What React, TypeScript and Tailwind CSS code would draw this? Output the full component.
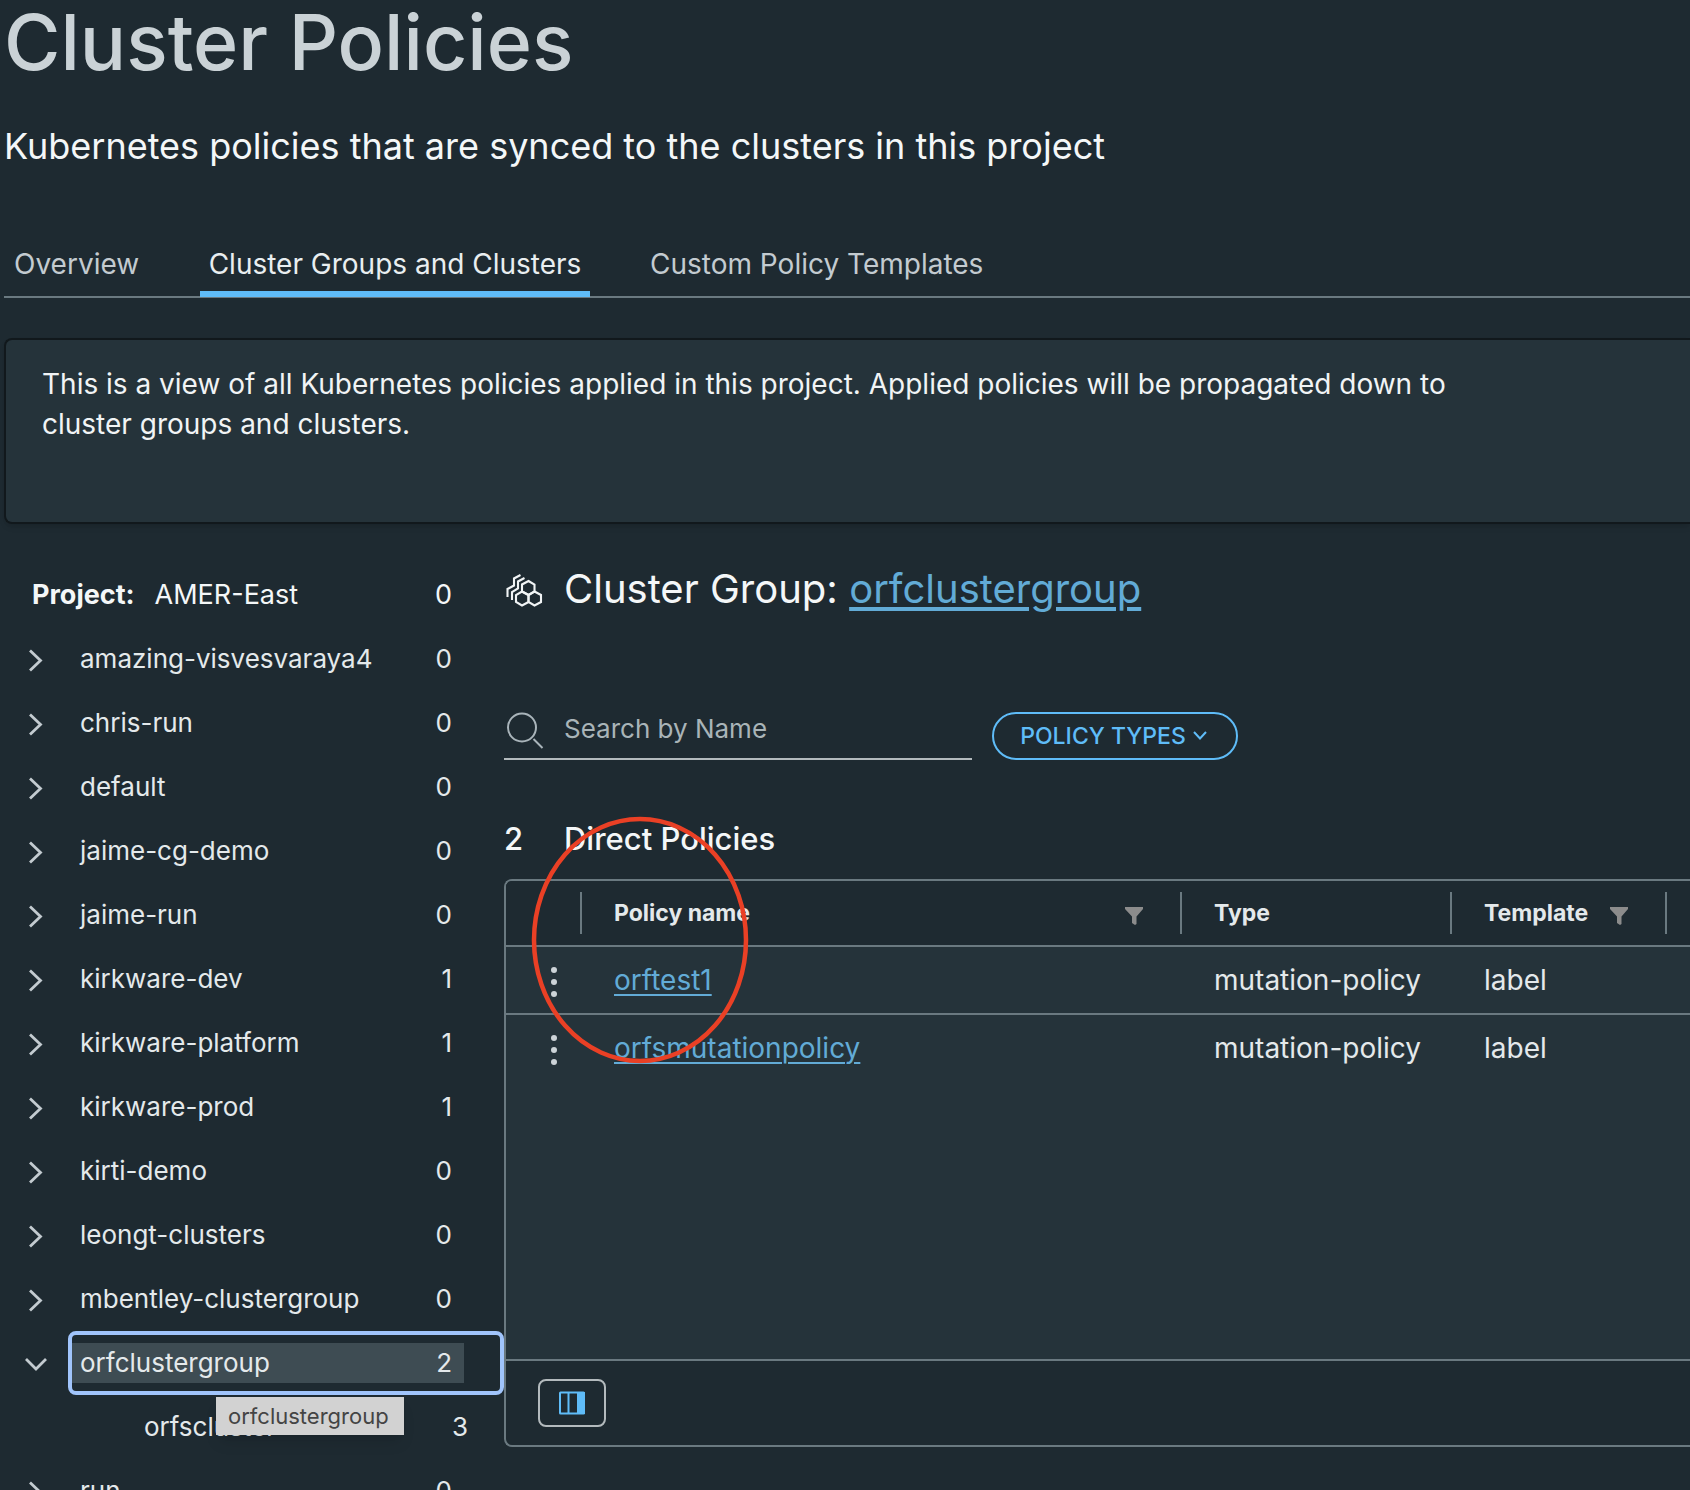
import React from "react";

type Group = { name: string; count: number };

const groups: Group[] = [
  { name: "amazing-visvesvaraya4", count: 0 },
  { name: "chris-run", count: 0 },
  { name: "default", count: 0 },
  { name: "jaime-cg-demo", count: 0 },
  { name: "jaime-run", count: 0 },
  { name: "kirkware-dev", count: 1 },
  { name: "kirkware-platform", count: 1 },
  { name: "kirkware-prod", count: 1 },
  { name: "kirti-demo", count: 0 },
  { name: "leongt-clusters", count: 0 },
  { name: "mbentley-clustergroup", count: 0 },
];

const policies = [
  { name: "orftest1", type: "mutation-policy", template: "label" },
  { name: "orfsmutationpolicy", type: "mutation-policy", template: "label" },
];

function Chevron({ open = false }: { open?: boolean }) {
  return (
    <svg viewBox="0 0 24 24" className="size-6" fill="none" stroke="#c3cbd0" strokeWidth="2.8">
      {open ? <path d="M2 6 L12 16 L22 6" /> : <path d="M6 1.5 L16.5 11.5 L6 21.5" />}
    </svg>
  );
}

function ClusterGroupIcon() {
  return (
    <svg viewBox="0 0 40 40" className="size-10 shrink-0" fill="none" stroke="#f1f4f5" strokeWidth="2.1">
      <path d="M24.5 12 L30.5 15.5 V22.5 L24.5 26 L18 22.5 V15.5 Z" />
      <path d="M18 22.5 L24.5 26 V33 L18 36.5 L12 33 V26 Z" />
      <path d="M30.5 22.5 L37 26 V33 L30.5 36.5 L24.5 33 V26 Z" />
      <path d="M20.5 9 L14 12.5 V19.5 L8 23 V31" />
      <path d="M16.5 6 L10 9.5 V16.5 L3.5 20 V28" />
    </svg>
  );
}

function FilterIcon() {
  return (
    <svg viewBox="0 0 20 20" className="size-5 shrink-0" fill="#8c8c8c">
      <path d="M1 2 H19 V4 L12.5 11.5 V19 L11 20 L8 18 V11.5 L1 4 Z" />
    </svg>
  );
}

function FilterButton({ label }: { label: string }) {
  return (
    <button type="button" aria-label={label} className="mt-1 flex">
      <FilterIcon />
    </button>
  );
}

function Tree() {
  return (
    <nav aria-label="Cluster groups" className="w-[504px] shrink-0 text-[26px] text-[#e4e9eb]">
      <div className="flex h-[63px] items-center pl-8 pr-[52px] text-[27px] text-[#f4f7f8]">
        <strong className="font-bold">Project:</strong>
        <span className="ml-5">AMER-East</span>
        <span className="ml-auto">0</span>
      </div>
      <ul>
        {groups.map((g) => (
          <li key={g.name} className="flex h-16 items-center">
            <button type="button" aria-label={"Expand " + g.name} className="ml-6 mt-1 flex">
              <Chevron />
            </button>
            <a href="#" className="ml-8 flex flex-1 pb-0.5 pr-[52px]">
              <span>{g.name}</span>
              <span className="ml-auto">{g.count}</span>
            </a>
          </li>
        ))}
        <li>
          <div className="relative flex h-16 items-center">
            <button type="button" aria-label="Collapse orfclustergroup" className="ml-6 mt-1 flex">
              <Chevron open />
            </button>
            <a
              href="#"
              aria-current="true"
              className="ml-5 flex h-full flex-1 items-center rounded-lg border-4 border-[#a0c4fb]"
            >
              <span className="mr-9 flex h-10 flex-1 items-center bg-[#3e4c53] pb-0.5 pl-2 pr-3">
                <span>orfclustergroup</span>
                <span className="ml-auto">2</span>
              </span>
            </a>
            <div
              role="tooltip"
              className="absolute left-[216px] top-[66px] z-10 flex h-[38px] w-[188px] items-center bg-[#d2d2d2] px-3 text-[22px] text-[#444] shadow-lg"
            >
              orfclustergroup
            </div>
          </div>
          <a href="#" className="flex h-16 items-center pb-0.5 pl-36 pr-9">
            <span>orfscluster</span>
            <span className="ml-auto">3</span>
          </a>
        </li>
        <li className="flex h-16 items-center">
          <button type="button" aria-label="Expand run" className="ml-6 mt-1 flex">
            <Chevron />
          </button>
          <a href="#" className="ml-8 flex flex-1 pb-0.5 pr-[52px]">
            <span>run</span>
            <span className="ml-auto">0</span>
          </a>
        </li>
      </ul>
    </nav>
  );
}

function HeaderCell({ label, filter = false }: { label: string; filter?: boolean }) {
  return (
    <th scope="col" className="h-[66px] border-b-2 border-[#6a7980] p-0 text-left font-bold">
      <div className="flex h-[42px] items-center justify-between border-r-2 border-[#6a7980] pl-8 pr-9">
        <span className="whitespace-nowrap">{label}</span>
        {filter && <FilterButton label={"Filter by " + label} />}
      </div>
    </th>
  );
}

function PolicyGrid() {
  return (
    <div className="relative mt-5">
      <div className="overflow-hidden rounded-l-lg border-2 border-r-0 border-[#6a7980]">
        <div className="min-h-[478px] bg-[#25333a]">
          <table className="w-full table-fixed border-separate border-spacing-0">
            <colgroup>
              <col className="w-[76px]" />
              <col className="w-[600px]" />
              <col className="w-[270px]" />
              <col className="w-[215px]" />
              <col />
            </colgroup>
            <thead className="bg-[#1e2a31] text-[23px] text-[#e4e9eb]">
              <tr>
                <th className="border-b-2 border-[#6a7980] p-0">
                  <div className="h-[42px] border-r-2 border-[#6a7980]" />
                </th>
                <HeaderCell label="Policy name" filter />
                <HeaderCell label="Type" />
                <HeaderCell label="Template" filter />
                <th className="border-b-2 border-[#6a7980] p-0" />
              </tr>
            </thead>
            <tbody className="text-[28px] text-[#e4e9eb] [&_td]:border-b-2 [&_td]:border-[#6a7980] [&>tr:last-child>td]:border-transparent">
              {policies.map((p) => (
                <tr key={p.name}>
                  <td className="h-[68px] p-0">
                    <button type="button" aria-label={"Actions for " + p.name} className="ml-9 mt-1 flex">
                      <svg viewBox="0 0 24 32" className="h-8 w-6" fill="#cdd4d8">
                        <circle cx="12" cy="4" r="3" />
                        <circle cx="12" cy="16" r="3" />
                        <circle cx="12" cy="28" r="3" />
                      </svg>
                    </button>
                  </td>
                  <td className="p-0 pl-8">
                    <a href="#" className="text-[#62abd6] underline decoration-2 underline-offset-4">
                      {p.name}
                    </a>
                  </td>
                  <td className="whitespace-nowrap p-0 pl-8">{p.type}</td>
                  <td className="p-0 pl-8">{p.template}</td>
                  <td className="p-0" />
                </tr>
              ))}
            </tbody>
          </table>
        </div>
        <div className="flex h-[86px] items-center border-t-2 border-[#6a7980] pl-8">
          <button
            type="button"
            aria-label="Choose columns"
            className="flex h-12 w-17 items-center justify-center rounded-lg border-2 border-[#b3babd]"
          >
            <svg viewBox="0 0 28 24" className="h-6 w-7">
              <rect x="2" y="1.5" width="24" height="21" rx="0.5" fill="none" stroke="#5fbcf8" strokeWidth="2" />
              <path d="M10.5 1 V23" stroke="#5fbcf8" strokeWidth="2" />
              <rect x="19" y="1" width="8" height="22" fill="#5fbcf8" />
            </svg>
          </button>
        </div>
      </div>
      <svg
        viewBox="0 0 220 250"
        className="pointer-events-none absolute -top-16 left-[26px] h-[250px] w-[220px]"
        fill="none"
        stroke="#ea4025"
        strokeWidth="4.5"
        aria-hidden="true"
      >
        <ellipse cx="110" cy="125" rx="106" ry="121" />
      </svg>
    </div>
  );
}

export default function App() {
  return (
    <div className="h-screen overflow-hidden bg-[#1e2a31] font-['Inter',sans-serif]">
      <header className="pl-1">
        <h1 className="text-[77px] font-medium leading-[84px] text-[#cad2d6]">Cluster Policies</h1>
        <p className="mt-[38px] text-[36px] leading-[48px] text-[#f4f7f8]">
          Kubernetes policies that are synced to the clusters in this project
        </p>
      </header>
      <div
        role="tablist"
        className="ml-1 mt-[78px] flex h-[50px] border-b-2 border-[#6a7980] text-[28px] leading-8 text-[#c3cbd0]"
      >
        <button type="button" role="tab" aria-selected="false" className="flex w-[136px] pl-[10px]">
          Overview
        </button>
        <button
          type="button"
          role="tab"
          aria-selected="true"
          className="-mb-px ml-[60px] flex w-[390px] justify-center whitespace-nowrap border-b-6 border-[#5fbcf8] text-[#e9eef0]"
        >
          Cluster Groups and Clusters
        </button>
        <button type="button" role="tab" aria-selected="false" className="ml-[60px] flex">
          Custom Policy Templates
        </button>
      </div>
      <section className="ml-1 mt-10 min-h-[186px] rounded-l-lg border-2 border-r-0 border-[#11181c] bg-[#25333a] px-9 pt-6 shadow-md">
        <p className="max-w-[1420px] text-[28px] leading-10 text-[#f1f4f5]">
          This is a view of all Kubernetes policies applied in this project. Applied policies will be propagated down to
          cluster groups and clusters.
        </p>
      </section>
      <div className="mt-10 flex">
        <Tree />
        <main className="min-w-0 flex-1">
          <div className="flex items-center">
            <ClusterGroupIcon />
            <h2 className="ml-5 text-[40px] leading-[50px] text-[#f4f7f8]">
              Cluster Group:{" "}
              <a href="#" className="text-[#62abd6] underline decoration-4 underline-offset-4">
                orfclustergroup
              </a>
            </h2>
          </div>
          <div className="mt-24 flex h-[50px] items-end gap-5">
            <label className="flex h-[50px] w-[468px] border-b-2 border-[#b3babd]">
              <svg viewBox="0 0 40 40" className="size-10 shrink-0" fill="none" stroke="#a9b4ba" strokeWidth="2">
                <circle cx="18" cy="17.5" r="14" />
                <path d="M29.5 29 L38.5 38" />
              </svg>
              <input
                type="text"
                aria-label="Search by Name"
                placeholder="Search by Name"
                className="ml-5 h-9 min-w-0 flex-1 bg-transparent text-[26px] text-[#e4e9eb] outline-none placeholder:text-[#a9b4b8]"
              />
            </label>
            <button
              type="button"
              className="flex h-12 w-[246px] items-center justify-center gap-1 rounded-full border-2 border-[#5fbcf8] text-[23px] font-medium text-[#5fbcf8]"
            >
              POLICY TYPES
              <svg viewBox="0 0 20 20" className="size-5" fill="none" stroke="#5fbcf8" strokeWidth="2">
                <path d="M4 6 L10 12.5 L16 6" />
              </svg>
            </button>
          </div>
          <h3 className="mt-[59px] flex text-[31px] font-medium leading-10 text-[#f4f7f8]">
            <span className="w-[60px]">2</span>
            <span>Direct Policies</span>
          </h3>
          <PolicyGrid />
        </main>
      </div>
    </div>
  );
}
